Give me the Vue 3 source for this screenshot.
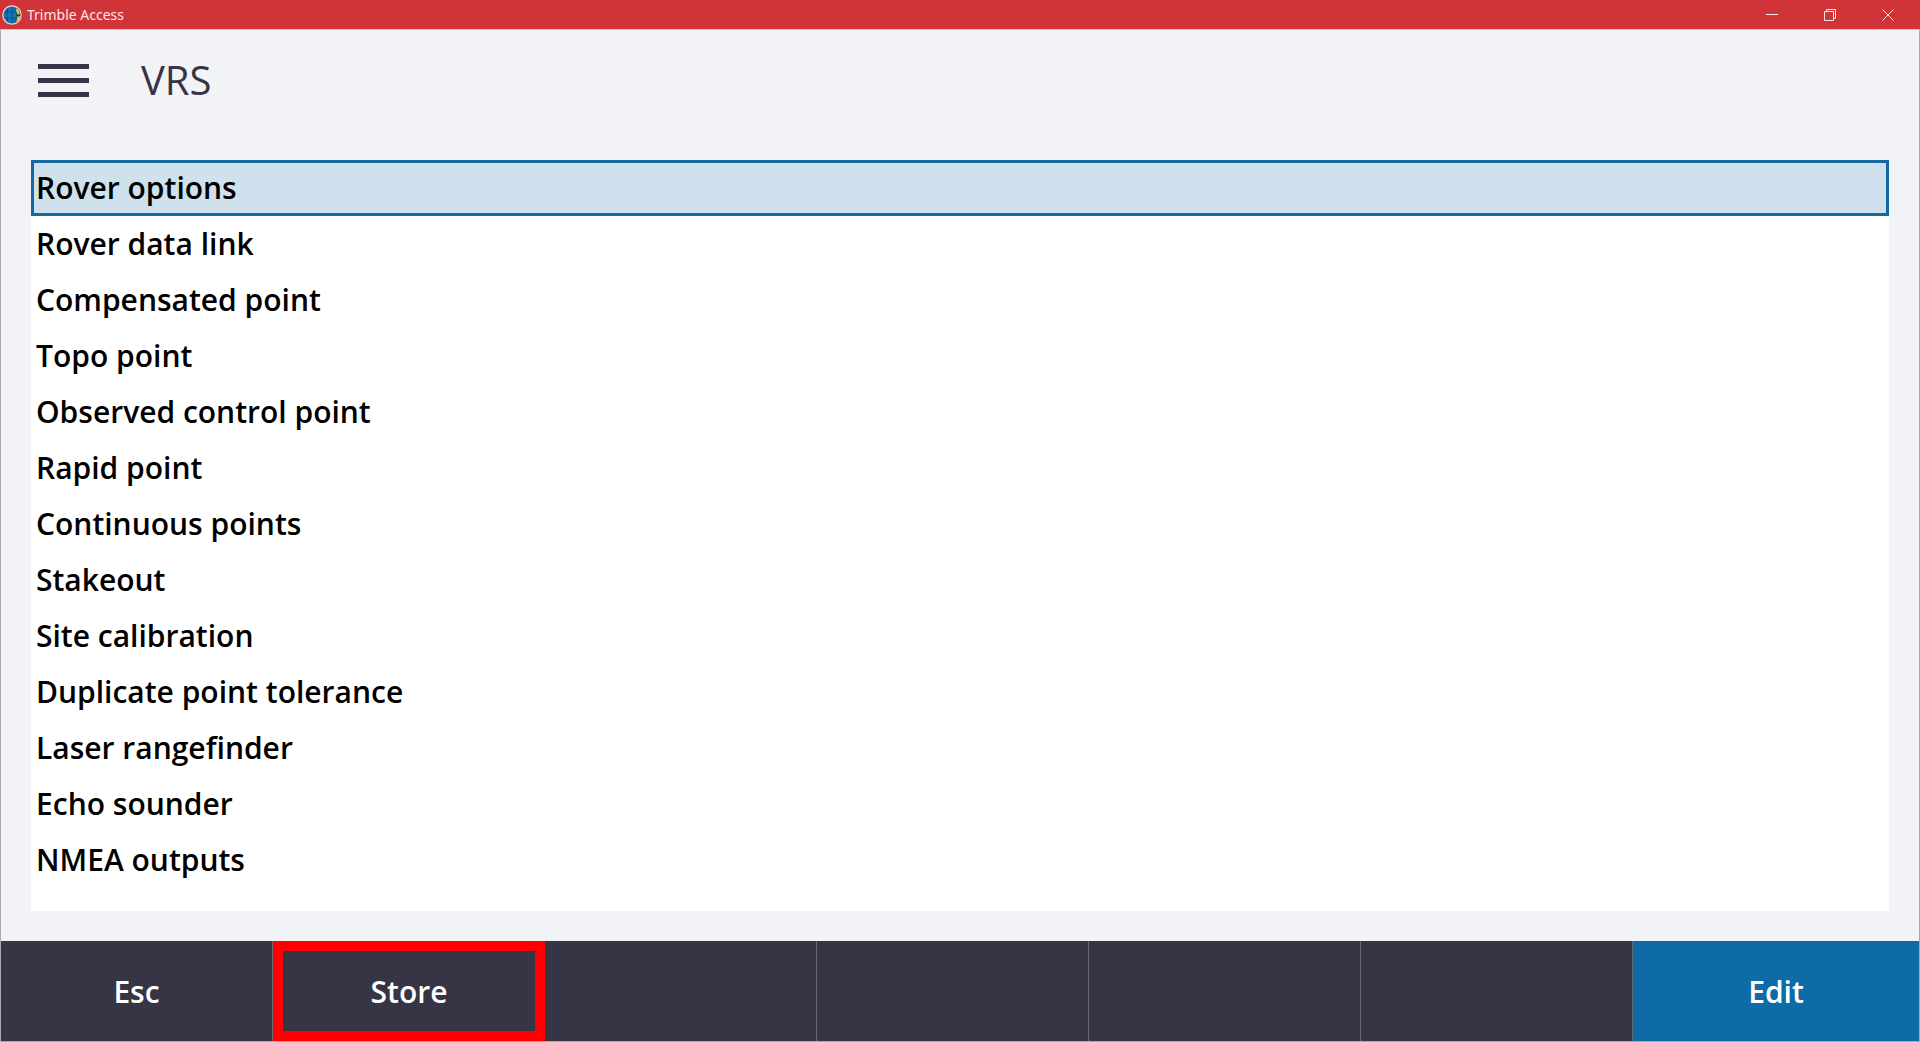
<script setup>
import { ref } from 'vue'

const items = [
  'Rover options',
  'Rover data link',
  'Compensated point',
  'Topo point',
  'Observed control point',
  'Rapid point',
  'Continuous points',
  'Stakeout',
  'Site calibration',
  'Duplicate point tolerance',
  'Laser rangefinder',
  'Echo sounder',
  'NMEA outputs',
]
const selected = ref(0)

const softkeys = [
  { label: 'Esc' },
  { label: 'Store', marked: true },
  { label: '' },
  { label: '' },
  { label: '' },
  { label: '' },
  { label: 'Edit', primary: true },
]
</script>

<template>
  <div class="window">
    <header class="titlebar">
      <svg class="globe" viewBox="0 0 20 20" aria-hidden="true">
        <circle cx="10" cy="10" r="9" fill="#0f78bd" />
        <path d="M13.500 1.700A9 9 0 0 1 14.500 17.700L13 15.500L15 12L14 9.500L15 7L12.500 4.500Z" fill="#173f4d" />
        <path d="M13.500 3l3 2 1.500 3.500-2 1.500-1.500-3zM15.500 11.500l3-.5-1.500 4-3 2z" fill="#d9c84c" />
        <path d="M10 1v18M1.500 7h12.500M1.500 13h12.500M6 2.500Q3.500 10 6 17.500" fill="none" stroke="#124a78" stroke-width="1" />
        <circle cx="10" cy="10" r="9.200" fill="none" stroke="#f3d5dc" stroke-width="1.200" />
      </svg>
      <span class="app-name">Trimble Access</span>
      <div class="controls">
        <button type="button" aria-label="Minimize">
          <svg viewBox="0 0 12 12"><path d="M0 5.500h12" /></svg>
        </button>
        <button type="button" aria-label="Restore">
          <svg viewBox="0 0 12 12"><path d="M.5 2.500h9v9h-9zM2.500 2.500v-2h9v9h-2" /></svg>
        </button>
        <button type="button" aria-label="Close">
          <svg viewBox="0 0 12 12"><path d="M.5.5l11 11M11.500.5l-11 11" /></svg>
        </button>
      </div>
    </header>

    <div class="body">
      <div class="heading">
        <button type="button" class="menu" aria-label="Menu">
          <span></span><span></span><span></span>
        </button>
        <h1>VRS</h1>
      </div>

      <ul class="list">
        <li v-for="(item, i) in items" :key="item">
          <button type="button" class="row" :class="{ selected: i === selected }" @click="selected = i">{{ item }}</button>
        </li>
      </ul>

      <footer class="softkeys">
        <button
          v-for="(key, i) in softkeys"
          :key="i"
          type="button"
          class="softkey"
          :class="{ marked: key.marked, primary: key.primary }"
          :disabled="!key.label"
        >{{ key.label }}</button>
      </footer>
    </div>
  </div>
</template>

<style>
body {
  margin: 0;
}
</style>

<style scoped>
.window {
  display: flex;
  flex-direction: column;
  min-height: 100vh;
  box-sizing: border-box;
  background: #f2f3f7;
  font-family: "Open Sans", "Noto Sans", sans-serif;
}
button {
  margin: 0;
  padding: 0;
  border: 0;
  background: none;
  font: inherit;
  color: inherit;
}
.titlebar {
  display: flex;
  align-items: center;
  height: 29px;
  padding: 0 3px 0 2px;
  background: #d03438;
  color: #fbe6e8;
}
.globe {
  width: 20px;
  height: 20px;
}
.app-name {
  margin-left: 5px;
  font-family: "Noto Sans", sans-serif;
  font-size: 14px;
  line-height: 20px;
}
.controls {
  display: flex;
  margin-left: auto;
}
.controls button {
  display: flex;
  align-items: center;
  justify-content: center;
  width: 58px;
  height: 29px;
}
.controls svg {
  width: 12px;
  height: 12px;
  fill: none;
  stroke: #fbe6e8;
  stroke-width: 1;
}
.body {
  flex: 1;
  display: flex;
  flex-direction: column;
  border: 1px solid #a9a9b1;
  border-top-color: #e3bcc2;
}
.heading {
  display: flex;
  align-items: center;
  gap: 52px;
  height: 100px;
  margin-bottom: 30px;
  padding-left: 37px;
  color: #363545;
}
.menu {
  display: flex;
  flex-direction: column;
  gap: 9px;
  width: 51px;
}
.menu span {
  height: 5px;
  background: #363545;
}
h1 {
  margin: 0;
  font-size: 40px;
  font-weight: 400;
  line-height: 56px;
}
.list {
  flex: 1;
  margin: 0 30px 30px;
  padding: 0;
  list-style: none;
  background: #fff;
}
.row {
  display: block;
  width: 100%;
  height: 56px;
  box-sizing: border-box;
  padding-left: 2px;
  border: 3px solid transparent;
  text-align: left;
  font-size: 30px;
  font-weight: 600;
  line-height: 50px;
  color: #000;
}
.row.selected {
  border-color: #1568a0;
  background: #cfe1ed;
}
.softkeys {
  display: grid;
  grid-template-columns: repeat(6, 272fr) 286fr;
}
.softkey {
  height: 100px;
  box-sizing: border-box;
  border-right: 1px solid #696877;
  background: #363545;
  color: #fff;
  font-size: 30px;
  font-weight: 600;
}
.softkey.marked {
  border: 0;
  outline: 10px solid #f00;
  outline-offset: -10px;
}
.softkey.primary {
  border: 0;
  background: #0e6ba8;
}
</style>
